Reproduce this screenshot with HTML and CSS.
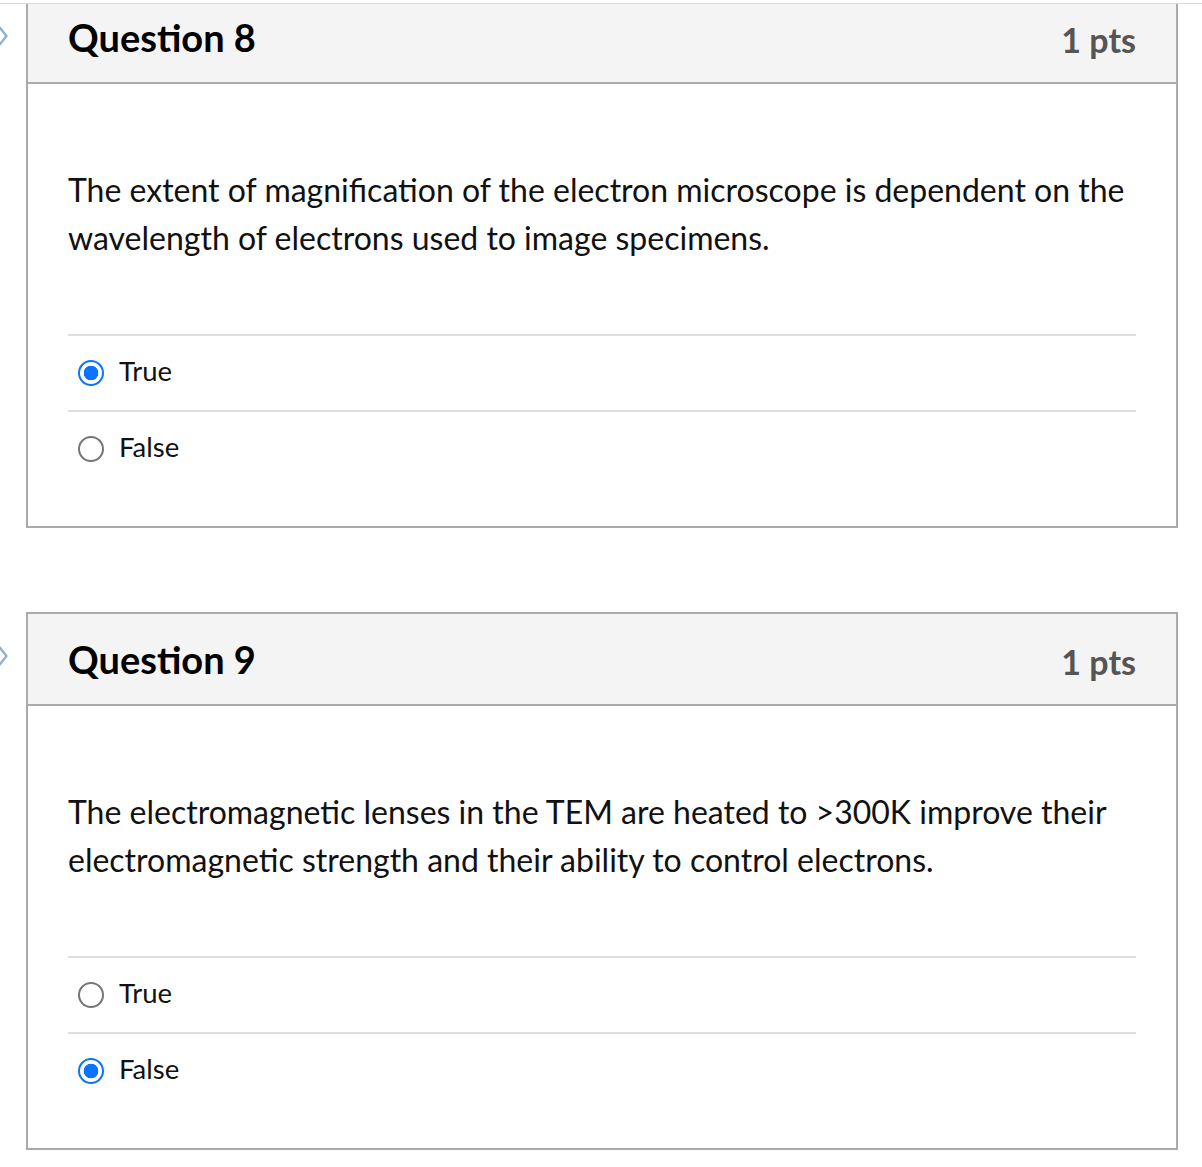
FILE: index.html
```html
<!DOCTYPE html>
<html lang="en">
<head>
<meta charset="utf-8">
<title>Quiz</title>
<link rel="stylesheet" href="styles.css">
</head>
<body>
<div class="topline"></div>
<main class="quiz">
  <section class="question">
    <svg class="flag" width="12" height="32" viewBox="0 0 12 32" aria-hidden="true"><path d="M-4 1 L6.5 14 L-4 27" fill="none" stroke="#8fb1c9" stroke-width="2.4" stroke-linejoin="round"/></svg>
    <header class="q-header">
      <h2 class="q-title">Question 8</h2>
      <span class="q-points">1 pts</span>
    </header>
    <div class="q-body">
      <p class="q-text">The extent of magnification of the electron microscope is dependent on the wavelength of electrons used to image specimens.</p>
      <div class="answers">
        <label class="answer"><input type="radio" name="q8" checked><span>True</span></label>
        <label class="answer"><input type="radio" name="q8"><span>False</span></label>
      </div>
    </div>
  </section>
  <section class="question">
    <svg class="flag" width="12" height="32" viewBox="0 0 12 32" aria-hidden="true"><path d="M-4 1 L6.5 14 L-4 27" fill="none" stroke="#8fb1c9" stroke-width="2.4" stroke-linejoin="round"/></svg>
    <header class="q-header">
      <h2 class="q-title">Question 9</h2>
      <span class="q-points">1 pts</span>
    </header>
    <div class="q-body">
      <p class="q-text">The electromagnetic lenses in the TEM are heated to &gt;300K improve their electromagnetic strength and their ability to control electrons.</p>
      <div class="answers">
        <label class="answer"><input type="radio" name="q9"><span>True</span></label>
        <label class="answer"><input type="radio" name="q9" checked><span>False</span></label>
      </div>
    </div>
  </section>
</main>
</body>
</html>
```
FILE: styles.css
```css
* { box-sizing: border-box; }
html, body { margin: 0; padding: 0; background: #fff; }
body {
  font-family: Lato, "Open Sans", Arial, sans-serif;
  color: #111;
  width: 1202px;
  overflow: hidden;
}
.topline {
  position: absolute;
  left: 0; top: 0;
  width: 100%;
  height: 4px;
  background: #fff;
  border-bottom: 1px solid #dcdcdc;
  z-index: 5;
}
.quiz {
  margin-top: -10px;
  padding: 0 24px 0 26px;
  display: flex;
  flex-direction: column;
  gap: 84px;
}
.question {
  position: relative;
  border: 2px solid #aaa;
}
.flag {
  position: absolute;
  left: -28px;
  top: 30px;
}
.question + .question .flag { top: 28px; }
.q-header {
  height: 92px;
  background: #f4f4f4;
  border-bottom: 2px solid #aaa;
  display: flex;
  align-items: center;
  justify-content: space-between;
  padding: 0 40px 0 40px;
}
.q-title {
  margin: 0;
  font-size: 38px;
  font-weight: 700;
  color: #000;
}
.q-points {
  font-size: 34px;
  font-weight: 700;
  color: #555;
  padding-top: 4px;
}
.q-body {
  padding: 82px 40px 40px;
}
.q-text {
  margin: 0 0 72px;
  font-size: 32px;
  line-height: 48px;
  color: #111;
}
.answers {
  display: flex;
  flex-direction: column;
}
.answer {
  display: flex;
  align-items: center;
  gap: 15px;
  height: 76px;
  padding-left: 10px;
  border-top: 2px solid #dedede;
  font-size: 27.5px;
  color: #111;
}
.answer span { padding-bottom: 6px; }
.answer input {
  appearance: none;
  -webkit-appearance: none;
  margin: 0;
  width: 26px;
  height: 26px;
  border-radius: 50%;
  border: 2px solid #767676;
  background: #fff;
  flex: none;
  margin-top: 0;
}
.answer input:checked {
  border: 2.5px solid #0b73ff;
  background: radial-gradient(circle, #0b73ff 0 7px, #fff 7.6px);
}
```
